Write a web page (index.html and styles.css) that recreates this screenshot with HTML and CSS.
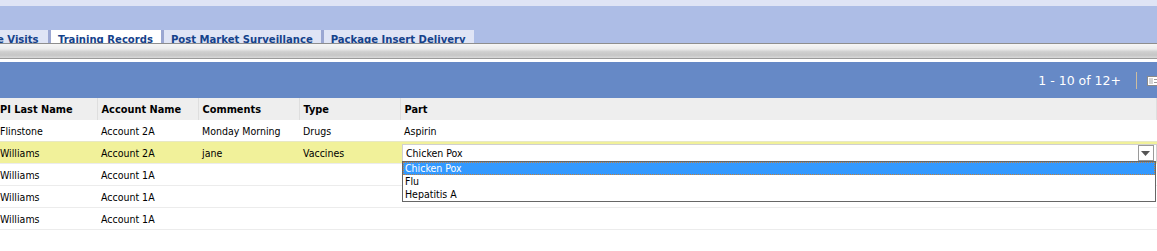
FILE: index.html
```html
<!DOCTYPE html>
<html lang="en">
<head>
    <meta charset="UTF-8">
    <title>Training Records</title>
    <link rel="stylesheet" href="styles.css">
</head>
<body>

    <div class="topband"></div>

    <div class="tabstrip">
        <div class="tab tab-first">e Visits</div>
        <div class="tab tab-active">Training Records</div>
        <div class="tab">Post Market Surveillance</div>
        <div class="tab">Package Insert Delivery</div>
    </div>

    <div class="silverbar"></div>

    <div class="gridbar">
        <span class="pager">1 - 10 of 12+</span>
        <span class="pager-sep"></span>
        <svg class="pager-icon" width="12" height="10" viewBox="0 0 12 10">
            <rect x="0.5" y="0.5" width="11" height="9" fill="#ffffff" stroke="#8a8a8a"/>
            <rect x="2" y="2" width="4" height="6" fill="#d4d4d4"/>
            <rect x="7" y="3" width="4" height="1" fill="#9a9a9a"/>
            <rect x="7" y="6" width="4" height="1" fill="#9a9a9a"/>
        </svg>
    </div>

    <table class="grid">
        <colgroup>
            <col class="c1">
            <col class="c2">
            <col class="c3">
            <col class="c4">
            <col>
        </colgroup>
        <thead>
            <tr>
                <th>PI Last Name</th>
                <th>Account Name</th>
                <th>Comments</th>
                <th>Type</th>
                <th>Part</th>
            </tr>
        </thead>
        <tbody>
            <tr class="before-edit">
                <td>Flinstone</td>
                <td>Account 2A</td>
                <td>Monday Morning</td>
                <td>Drugs</td>
                <td>Aspirin</td>
            </tr>
            <tr class="editing">
                <td>Williams</td>
                <td>Account 2A</td>
                <td>jane</td>
                <td>Vaccines</td>
                <td class="part-cell">
                    <div class="combo">
                        <span class="combo-value">Chicken Pox</span>
                        <span class="combo-btn">
                            <svg width="9" height="5" viewBox="0 0 9 5"><path d="M0 0h9L4.5 5z" fill="#555"/></svg>
                        </span>
                        <ul class="combo-list">
                            <li class="selected">Chicken Pox</li>
                            <li>Flu</li>
                            <li>Hepatitis A</li>
                        </ul>
                    </div>
                </td>
            </tr>
            <tr>
                <td>Williams</td>
                <td>Account 1A</td>
                <td></td>
                <td></td>
                <td></td>
            </tr>
            <tr>
                <td>Williams</td>
                <td>Account 1A</td>
                <td></td>
                <td></td>
                <td></td>
            </tr>
            <tr>
                <td>Williams</td>
                <td>Account 1A</td>
                <td></td>
                <td></td>
                <td></td>
            </tr>
        </tbody>
    </table>

</body>
</html>
```

FILE: styles.css
```css
body {
    margin: 0;
    width: 1157px;
    height: 251px;
    overflow: hidden;
    background-color: #ffffff;
    font-family: "DejaVu Sans Condensed", "DejaVu Sans", sans-serif;
    font-size: 10.5px;
    color: #000;
}

.topband {
    height: 6px;
    background-color: #dfe4f5;
}

.tabstrip {
    height: 37px;
    background-color: #adbde6;
    display: flex;
    align-items: flex-end;
    overflow: hidden;
}

.tab {
    height: 10px;
    padding: 3px 8px 0 7px;
    margin-left: 3px;
    background-color: #dfe4f5;
    box-shadow: -3px 0 0 #9ba7d2;
    color: #15428b;
    font-weight: bold;
    font-size: 11.2px;
    line-height: 13px;
    overflow: hidden;
    white-space: nowrap;
}

.tab-first {
    margin-left: -10px;
    width: 43px;
}

.tab-active {
    background-color: #ffffff;
}

.silverbar {
    height: 14px;
    border-top: 1px solid #8e8e8e;
    border-bottom: 1px solid #9a9a9a;
    background: linear-gradient(#f6f6f6 0%, #ececec 35%, #cfcfcf 55%, #c6c6c6 80%, #d9d9d9 100%);
}

.gridbar {
    margin-top: 3px;
    height: 36px;
    background-color: #6689c6;
    display: flex;
    align-items: center;
    justify-content: flex-end;
    overflow: hidden;
}

.pager {
    color: #ffffff;
    font-family: "DejaVu Sans", sans-serif;
    font-size: 12.5px;
    margin-right: 15px;
}

.pager-sep {
    width: 1px;
    height: 17px;
    background-color: #cdbd9e;
    margin-right: 10px;
}

.pager-icon {
    flex-shrink: 0;
    margin-right: -2px;
    margin-top: 2px;
}

.grid {
    border-collapse: collapse;
    table-layout: fixed;
    margin-left: -4px;
    width: 1161px;
}

.c1, .c2, .c3, .c4 {
    width: 101px;
}

.grid th {
    height: 22px;
    padding: 0 4px;
    text-align: left;
    background-color: #eeeeee;
    border-right: 1px solid #dedede;
    font-weight: bold;
    font-size: 10.9px;
    white-space: nowrap;
    overflow: hidden;
}

.grid td {
    height: 21px;
    padding: 0 4px;
    border-bottom: 1px solid #ececec;
    white-space: nowrap;
}

.grid tr.before-edit td {
    border-bottom-color: #e8e8c4;
}

.grid tr.editing td {
    background-color: #f1f19a;
}

.grid td.part-cell {
    padding: 0 0 0 2px;
    vertical-align: top;
    background-color: #ffffff;
}

.combo {
    position: relative;
    height: 16px;
    margin-top: 2px;
    border: 1px solid #d0d0d0;
    background-color: #ffffff;
    display: flex;
    align-items: center;
}

.combo-value {
    flex: 1;
    padding-left: 3px;
}

.combo-btn {
    width: 14px;
    height: 14px;
    margin-right: 2px;
    border: 1px solid #9a9a9a;
    display: flex;
    align-items: center;
    justify-content: center;
}

.combo-list {
    position: absolute;
    top: 16px;
    left: -1px;
    right: 0;
    margin: 0;
    padding: 0;
    list-style: none;
    border: 1px solid #666666;
    background-color: #ffffff;
    z-index: 2;
}

.combo-list li {
    height: 13px;
    line-height: 13px;
    padding-left: 2px;
}

.combo-list li.selected {
    background-color: #3399ff;
    color: #ffffff;
    outline: 1px dotted #c08040;
    outline-offset: -1px;
}
```
